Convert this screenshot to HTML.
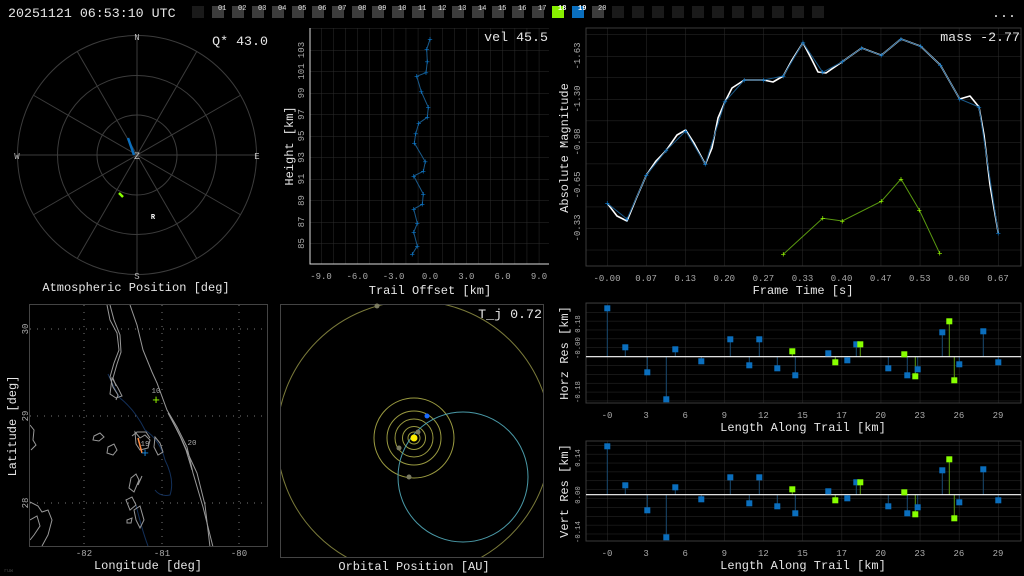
<!DOCTYPE html>
<html><head><meta charset="utf-8"><style>
html,body{margin:0;padding:0;background:#000;width:1024px;height:576px;overflow:hidden}
svg{display:block;font-family:"Liberation Mono",monospace}
.t{fill:#aaa;font-size:9px}
.rs{font-size:7.3px}
.ti{fill:#e6e6e6;font-size:12px}
.big{fill:#e6e6e6;font-size:13.3px}
.bx{font-size:7px;fill:#ddd}
</style></head><body>
<svg width="1024" height="576" viewBox="0 0 1024 576" xmlns="http://www.w3.org/2000/svg">
<defs>
<pattern id="gh" x="321" y="50" width="12.1" height="21.5" patternUnits="userSpaceOnUse"><path d="M0 0V21.5M0 0H12.1" stroke="#2c2c2c" stroke-width="1" fill="none"/></pattern>
<pattern id="gm" x="607" y="56" width="39.1" height="21.53" patternUnits="userSpaceOnUse"><path d="M0 0V21.53M0 0H39.1" stroke="#2c2c2c" stroke-width="1" fill="none"/></pattern>
<pattern id="gr" x="607" y="312" width="39.1" height="8.87" patternUnits="userSpaceOnUse"><path d="M0 0V8.87M0 0H39.1" stroke="#2c2c2c" stroke-width="1" fill="none"/></pattern>
<clipPath id="oc"><rect x="281" y="305" width="262" height="252"/></clipPath>
<clipPath id="mc"><rect x="30" y="305" width="237" height="241"/></clipPath>
<g id="res">
<g stroke="#1a4a70" stroke-width="1">
<path d="M607.3 356.7V308.3M625.3 356.7V347.3M647.3 356.7V372.3M666.3 356.7V399.3M675.3 356.7V349.3M701.3 356.7V361.3M730.3 356.7V339.3M749.3 356.7V365.3M759.3 356.7V339.3M777.3 356.7V368.3M795.3 356.7V375.3M828.3 356.7V353.3M847.3 356.7V360.3M856.3 356.7V344.3M888.3 356.7V368.3M907.3 356.7V375.3M917.7 356.7V369.3M942.3 356.7V332.3M959.3 356.7V364.3M983.3 356.7V331.3M998.3 356.7V362.3"/>
</g>
<g stroke="#5a9a10" stroke-width="1">
<path d="M792.3 356.7V351.3M835.3 356.7V362.3M860.3 356.7V344.3M904.3 356.7V354.3M915.3 356.7V376.3M949.3 356.7V321.3M954.3 356.7V380.3"/>
</g>
<path d="M586 356.7H1021" stroke="#fff" stroke-width="1.2"/>
<g fill="#0a6ebd">
<rect x="604.3" y="305.3" width="6" height="6"/><rect x="622.3" y="344.3" width="6" height="6"/><rect x="644.3" y="369.3" width="6" height="6"/><rect x="663.3" y="396.3" width="6" height="6"/><rect x="672.3" y="346.3" width="6" height="6"/><rect x="698.3" y="358.3" width="6" height="6"/><rect x="727.3" y="336.3" width="6" height="6"/><rect x="746.3" y="362.3" width="6" height="6"/><rect x="756.3" y="336.3" width="6" height="6"/><rect x="774.3" y="365.3" width="6" height="6"/><rect x="792.3" y="372.3" width="6" height="6"/><rect x="825.3" y="350.3" width="6" height="6"/><rect x="844.3" y="357.3" width="6" height="6"/><rect x="853.3" y="341.3" width="6" height="6"/><rect x="885.3" y="365.3" width="6" height="6"/><rect x="904.3" y="372.3" width="6" height="6"/><rect x="914.7" y="366.3" width="6" height="6"/><rect x="939.3" y="329.3" width="6" height="6"/><rect x="956.3" y="361.3" width="6" height="6"/><rect x="980.3" y="328.3" width="6" height="6"/><rect x="995.3" y="359.3" width="6" height="6"/>
</g>
<g fill="#88ff00">
<rect x="789.3" y="348.3" width="6" height="6"/><rect x="832.3" y="359.3" width="6" height="6"/><rect x="857.3" y="341.3" width="6" height="6"/><rect x="901.3" y="351.3" width="6" height="6"/><rect x="912.3" y="373.3" width="6" height="6"/><rect x="946.3" y="318.3" width="6" height="6"/><rect x="951.3" y="377.3" width="6" height="6"/>
</g>
</g>
</defs>

<!-- top bar -->
<text x="8" y="17" class="big">20251121 06:53:10 UTC</text>
<g>
<rect x="192" y="6" width="12" height="12" fill="#1a1a1a"/>
<g fill="#3c3c3c">
<rect x="212" y="6" width="12" height="12"/><rect x="232" y="6" width="12" height="12"/><rect x="252" y="6" width="12" height="12"/><rect x="272" y="6" width="12" height="12"/><rect x="292" y="6" width="12" height="12"/><rect x="312" y="6" width="12" height="12"/><rect x="332" y="6" width="12" height="12"/><rect x="352" y="6" width="12" height="12"/><rect x="372" y="6" width="12" height="12"/><rect x="392" y="6" width="12" height="12"/><rect x="412" y="6" width="12" height="12"/><rect x="432" y="6" width="12" height="12"/><rect x="452" y="6" width="12" height="12"/><rect x="472" y="6" width="12" height="12"/><rect x="492" y="6" width="12" height="12"/><rect x="512" y="6" width="12" height="12"/><rect x="532" y="6" width="12" height="12"/><rect x="592" y="6" width="12" height="12"/>
</g>
<rect x="552" y="6" width="12" height="12" fill="#88ee00"/>
<rect x="572" y="6" width="12" height="12" fill="#0a6ebd"/>
<g fill="#1a1a1a">
<rect x="612" y="6" width="12" height="12"/><rect x="632" y="6" width="12" height="12"/><rect x="652" y="6" width="12" height="12"/><rect x="672" y="6" width="12" height="12"/><rect x="692" y="6" width="12" height="12"/><rect x="712" y="6" width="12" height="12"/><rect x="732" y="6" width="12" height="12"/><rect x="752" y="6" width="12" height="12"/><rect x="772" y="6" width="12" height="12"/><rect x="792" y="6" width="12" height="12"/><rect x="812" y="6" width="12" height="12"/>
</g>
<g class="bx">
<text x="218" y="10">01</text><text x="238" y="10">02</text><text x="258" y="10">03</text><text x="278" y="10">04</text><text x="298" y="10">05</text><text x="318" y="10">06</text><text x="338" y="10">07</text><text x="358" y="10">08</text><text x="378" y="10">09</text><text x="398" y="10">10</text><text x="418" y="10">11</text><text x="438" y="10">12</text><text x="458" y="10">13</text><text x="478" y="10">14</text><text x="498" y="10">15</text><text x="518" y="10">16</text><text x="538" y="10">17</text><text x="558" y="10" style="fill:#fff;font-weight:bold">18</text><text x="578" y="10" style="fill:#fff;font-weight:bold">19</text><text x="598" y="10">20</text>
</g>
<text x="1016" y="17" class="big" text-anchor="end">...</text>
</g>

<!-- polar -->
<g stroke="#3c3c3c" stroke-width="1" fill="none">
<circle cx="137" cy="155" r="40"/><circle cx="137" cy="155" r="79.5"/><circle cx="137" cy="155" r="119.5"/>
<path d="M137 35.5V274.5M17.5 155H256.5M77.25 51.5L196.75 258.5M33.5 95.25L240.5 214.75M33.5 214.75L240.5 95.25M77.25 258.5L196.75 51.5"/>
</g>
<g class="t" text-anchor="middle" style="fill:#bbb">
<text x="137" y="40">N</text><text x="137" y="279">S</text><text x="17" y="159">W</text><text x="257" y="159">E</text><text x="137" y="159" style="font-size:10px">Z</text>
</g>
<path d="M128 138L134 155" stroke="#0a6ebd" stroke-width="2.5"/>
<path d="M119 193L123 197" stroke="#88ff00" stroke-width="2.5"/>
<text x="153" y="219" style="fill:#fff;font-size:7px;font-weight:bold" text-anchor="middle">R</text>
<text x="268" y="45" class="big" text-anchor="end">Q* 43.0</text>
<text x="136" y="291" class="ti" text-anchor="middle">Atmospheric Position [deg]</text>

<!-- height plot -->
<rect x="310" y="28" width="239" height="236" fill="url(#gh)"/>
<path d="M310 28V264H549" stroke="#ddd" stroke-width="1" fill="none"/>
<polyline fill="none" stroke="#1a5a8a" stroke-width="1" points="430,39.3 426.7,49.3 427.3,61.7 426,72.7 416.7,76.3 421.3,91.7 428.3,107.3 427.3,117.3 418.7,123.3 415.7,133.7 414.3,143 425.3,161.7 423.3,171.3 413.7,176 423.3,194 422.3,204.3 413.7,209 417.3,223.3 413.7,232.3 417.3,246 412.3,254.3"/>
<g fill="#0a7ad0" font-size="9" text-anchor="middle" font-family="Liberation Sans,sans-serif">
<text x="430" y="42.5">+</text><text x="426.7" y="52.5">+</text><text x="427.3" y="65">+</text><text x="426" y="76">+</text><text x="416.7" y="79.5">+</text><text x="421.3" y="95">+</text><text x="428.3" y="110.5">+</text><text x="427.3" y="120.5">+</text><text x="418.7" y="126.5">+</text><text x="415.7" y="137">+</text><text x="414.3" y="146.5">+</text><text x="425.3" y="165">+</text><text x="423.3" y="174.5">+</text><text x="413.7" y="179.5">+</text><text x="423.3" y="197.5">+</text><text x="422.3" y="207.5">+</text><text x="413.7" y="212.5">+</text><text x="417.3" y="226.5">+</text><text x="413.7" y="235.5">+</text><text x="417.3" y="249.5">+</text><text x="412.3" y="257.5">+</text>
</g>
<g class="t" text-anchor="middle">
<text x="321" y="279">-9.0</text><text x="357.3" y="279">-6.0</text><text x="393.6" y="279">-3.0</text><text x="430" y="279">0.0</text><text x="466.3" y="279">3.0</text><text x="502.6" y="279">6.0</text><text x="539" y="279">9.0</text>
</g>
<g class="t" text-anchor="middle">
<text transform="translate(304,50) rotate(-90)">103</text><text transform="translate(304,71.5) rotate(-90)">101</text><text transform="translate(304,93) rotate(-90)">99</text><text transform="translate(304,114.5) rotate(-90)">97</text><text transform="translate(304,136) rotate(-90)">95</text><text transform="translate(304,157.5) rotate(-90)">93</text><text transform="translate(304,179) rotate(-90)">91</text><text transform="translate(304,200.5) rotate(-90)">89</text><text transform="translate(304,222) rotate(-90)">87</text><text transform="translate(304,243.5) rotate(-90)">85</text>
</g>
<text transform="translate(293,146) rotate(-90)" class="ti" text-anchor="middle">Height [km]</text>
<text x="430" y="294" class="ti" text-anchor="middle">Trail Offset [km]</text>
<text x="548" y="41" class="big" text-anchor="end">vel 45.5</text>

<!-- magnitude -->
<rect x="586" y="28" width="435" height="238" fill="url(#gm)"/>
<rect x="586" y="28" width="435" height="238" fill="none" stroke="#3a3a3a"/>
<polyline fill="none" stroke="#fff" stroke-width="1.6" stroke-linejoin="round" points="607.3,203.3 617,216 627,221 636,199 646.3,175.3 656,161 666,150.7 677,135 685.7,130 694,143 705.3,164.3 712,148 718,118 725,101.7 732,88 744.3,80 763.7,80 773,82 783.3,76 792,60 803,42.7 812,60 818,72 826,73 842.3,61.7 861.7,48 881.3,55.3 901,39 920.7,46.3 940.3,65 950,82 959.7,99 970,96 979,107 984,135 990,185 998.3,233.3"/>
<polyline fill="none" stroke="#1a5a8a" stroke-width="1" points="607.3,203.3 627,219 646.3,175.3 666,150.7 685.7,131 705.3,164.3 725,101.7 744.3,80 763.7,80 783.3,76 803,42.7 822.7,72.3 842.3,61.7 861.7,48 881.3,55.3 901,39 920.7,46.3 940.3,65 959.7,99 979,107 998.3,233.3"/>
<polyline fill="none" stroke="#5a9a10" stroke-width="1" points="783.3,254.3 822.7,218.3 842.3,221 881.3,201.3 901,179 919.3,210 939.7,253.3"/>
<g fill="#0a7ad0" font-size="9" text-anchor="middle" font-family="Liberation Sans,sans-serif">
<text x="607.3" y="206.6">+</text><text x="627" y="222.3">+</text><text x="646.3" y="178.6">+</text><text x="666" y="154">+</text><text x="685.7" y="134.3">+</text><text x="705.3" y="167.6">+</text><text x="725" y="105">+</text><text x="744.3" y="83.3">+</text><text x="763.7" y="83.3">+</text><text x="783.3" y="79.3">+</text><text x="803" y="46">+</text><text x="822.7" y="75.6">+</text><text x="842.3" y="65">+</text><text x="861.7" y="51.3">+</text><text x="881.3" y="58.6">+</text><text x="901" y="42.3">+</text><text x="920.7" y="49.6">+</text><text x="940.3" y="68.3">+</text><text x="959.7" y="102.3">+</text><text x="979" y="110.3">+</text><text x="998.3" y="236.6">+</text>
</g>
<g fill="#99ff00" font-size="9" text-anchor="middle" font-family="Liberation Sans,sans-serif">
<text x="783.3" y="257.6">+</text><text x="822.7" y="221.6">+</text><text x="842.3" y="224.3">+</text><text x="881.3" y="204.6">+</text><text x="901" y="182.3">+</text><text x="919.3" y="213.3">+</text><text x="939.7" y="256.6">+</text>
</g>
<g class="t" text-anchor="middle">
<text x="607" y="281">-0.00</text><text x="646.1" y="281">0.07</text><text x="685.2" y="281">0.13</text><text x="724.3" y="281">0.20</text><text x="763.4" y="281">0.27</text><text x="802.5" y="281">0.33</text><text x="841.6" y="281">0.40</text><text x="880.7" y="281">0.47</text><text x="919.8" y="281">0.53</text><text x="958.9" y="281">0.60</text><text x="998" y="281">0.67</text>
</g>
<g class="t" text-anchor="middle">
<text transform="translate(580,56) rotate(-90)">-1.63</text><text transform="translate(580,99) rotate(-90)">-1.30</text><text transform="translate(580,142) rotate(-90)">-0.98</text><text transform="translate(580,185) rotate(-90)">-0.65</text><text transform="translate(580,228) rotate(-90)">-0.33</text>
</g>
<text transform="translate(568,148) rotate(-90)" class="ti" text-anchor="middle">Absolute Magnitude</text>
<text x="803" y="294" class="ti" text-anchor="middle">Frame Time [s]</text>
<text x="1020" y="41" class="big" text-anchor="end">mass -2.77</text>

<!-- horz res -->
<rect x="586" y="303" width="435" height="100" fill="url(#gr)"/>
<rect x="586" y="303" width="435" height="100" fill="none" stroke="#3a3a3a"/>
<use href="#res"/>
<g class="t" text-anchor="middle">
<text x="607" y="418">-0</text><text x="646.1" y="418">3</text><text x="685.2" y="418">6</text><text x="724.3" y="418">9</text><text x="763.4" y="418">12</text><text x="802.5" y="418">15</text><text x="841.6" y="418">17</text><text x="880.7" y="418">20</text><text x="919.8" y="418">23</text><text x="958.9" y="418">26</text><text x="998" y="418">29</text>
</g>
<g class="t rs" text-anchor="middle">
<text transform="translate(580,324) rotate(-90)">0.18</text><text transform="translate(580,348) rotate(-90)">-0.00</text><text transform="translate(580,392) rotate(-90)">-0.18</text>
</g>
<text transform="translate(568,353) rotate(-90)" class="ti" text-anchor="middle">Horz Res [km]</text>
<text x="803" y="431" class="ti" text-anchor="middle">Length Along Trail [km]</text>

<!-- vert res -->
<rect x="586" y="441" width="435" height="100" fill="url(#gr)"/>
<rect x="586" y="441" width="435" height="100" fill="none" stroke="#3a3a3a"/>
<use href="#res" transform="translate(0,138)"/>
<g class="t" text-anchor="middle">
<text x="607" y="556">-0</text><text x="646.1" y="556">3</text><text x="685.2" y="556">6</text><text x="724.3" y="556">9</text><text x="763.4" y="556">12</text><text x="802.5" y="556">15</text><text x="841.6" y="556">17</text><text x="880.7" y="556">20</text><text x="919.8" y="556">23</text><text x="958.9" y="556">26</text><text x="998" y="556">29</text>
</g>
<g class="t rs" text-anchor="middle">
<text transform="translate(580,458) rotate(-90)">0.14</text><text transform="translate(580,495) rotate(-90)">0.00</text><text transform="translate(580,532) rotate(-90)">-0.14</text>
</g>
<text transform="translate(568,491) rotate(-90)" class="ti" text-anchor="middle">Vert Res [km]</text>
<text x="803" y="569" class="ti" text-anchor="middle">Length Along Trail [km]</text>

<!-- map -->
<rect x="29.5" y="304.5" width="238" height="242" fill="none" stroke="#444"/>
<g stroke="#777" stroke-width="1" stroke-dasharray="1 6" fill="none">
<path d="M30 329H267M30 416H267M30 503H267M84 305V546M162 305V546M239 305V546"/>
</g>
<g clip-path="url(#mc)" fill="none" stroke-width="1">
<path d="M108 374 Q115 390 120 398 Q135 410 145 430 Q160 440 165 460 Q175 480 170 495 Q160 497 155 490 M136 505 Q142 530 148 546" stroke="#13305a"/>
<g stroke="#999">
<path d="M130 305 L137 325 L143 350 L152 372 L157 383 L167 410 L177 427 L187 447 L193 473 L203 507 L213 547"/>
<path d="M168 413 L176 428 L182 440 L190 458 L197 473 L205 505 L210 547"/>
<path d="M172 420 L180 436 L186 450 L192 470"/>
<path d="M107 305 L110 320 L117 333 L119 350 L114 363 L110 377 L113 387 L118 395 L116 400 M110 305 L114 320 L120 335 L121 352 L117 364 L113 378 L116 386"/>
<path d="M112 378 L118 388 L122 396 L116 398 L110 394 Z"/>
<path d="M135 432 L140 438 L145 435 L150 440 L148 448 L140 450 L136 444 Z M132 436 L137 432 L146 432 L150 438"/>
<path d="M155 437 L160 443 L163 452 L158 455 L154 447 Z"/>
<path d="M94 436 L100 433 L104 437 L99 441 L93 440 Z"/>
<path d="M108 447 L114 444 L117 450 L113 455 L107 453 Z"/>
<path d="M131 478 L136 474 L139 480 L134 492 L129 488 Z M138 485 L142 476"/>
<path d="M126 500 L132 497 L136 505 L130 510 Z M134 510 L140 506 L144 520 L140 528 L136 520 Z"/>
<path d="M127 520 L132 518 L131 523 L127 523 Z"/>
<path d="M30 425 L34 430 L33 440 L36 445 L31 450 M30 502 L38 506 L42 512 L48 510 L52 520 L48 535 L42 546 M30 520 L37 516 L40 526 L34 535 L30 540"/>
</g>
</g>
<path d="M138 438L142 453" stroke="#ff8a40" stroke-width="1.5"/>
<text x="156" y="404" fill="#99ff00" font-size="13" text-anchor="middle" font-family="Liberation Sans,sans-serif">+</text>
<text x="145" y="457" fill="#1a8ae0" font-size="13" text-anchor="middle" font-family="Liberation Sans,sans-serif">+</text>
<text x="156" y="393" class="t" text-anchor="middle" style="font-size:7.5px">10</text>
<text x="192" y="445" class="t" text-anchor="middle" style="font-size:7.5px">20</text>
<text x="145" y="446" class="t" text-anchor="middle" style="font-size:7.5px">19</text>
<g class="t" text-anchor="middle">
<text x="84" y="556">-82</text><text x="162" y="556">-81</text><text x="239" y="556">-80</text>
<text transform="translate(28,329) rotate(-90)">30</text><text transform="translate(28,416) rotate(-90)">29</text><text transform="translate(28,503) rotate(-90)">28</text>
</g>
<text transform="translate(16,426) rotate(-90)" class="ti" text-anchor="middle">Latitude [deg]</text>
<text x="148" y="569" class="ti" text-anchor="middle">Longitude [deg]</text>
<text x="4" y="572" fill="#444" font-size="5">ruw</text>

<!-- orbital -->
<rect x="280.5" y="304.5" width="263" height="253" fill="none" stroke="#444"/>
<g clip-path="url(#oc)" fill="none" stroke-width="1">
<circle cx="414" cy="438" r="137" stroke="#7a7a3a"/>
<g stroke="#9a9a40">
<circle cx="414" cy="438" r="40"/><circle cx="414" cy="438" r="27"/><circle cx="414" cy="438" r="19"/><circle cx="414" cy="438" r="11.5"/><circle cx="414" cy="438" r="6"/>
</g>
<circle cx="463" cy="477" r="65" stroke="#4a9aa8"/>
</g>
<g fill="#7a7a60">
<circle cx="377" cy="306" r="2.5"/><circle cx="418" cy="432" r="2.5"/><circle cx="399" cy="448" r="2.5"/><circle cx="409" cy="477" r="2.5"/>
</g>
<circle cx="414" cy="438" r="3.5" fill="#ffee00"/>
<circle cx="427" cy="416" r="2.5" fill="#1a6aff"/>
<text x="542" y="318" class="big" text-anchor="end">T_j 0.72</text>
<text x="414" y="570" class="ti" text-anchor="middle">Orbital Position [AU]</text>
</svg>
</body></html>
